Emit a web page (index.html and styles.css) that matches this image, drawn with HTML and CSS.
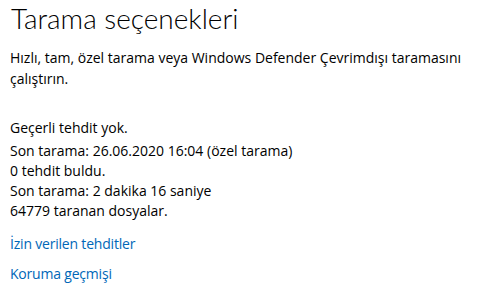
FILE: index.html
```html
<!DOCTYPE html>
<html lang="tr">
<head>
<meta charset="utf-8">
<link rel="stylesheet" href="styles.css">
</head>
<body>
<main class="page">
  <h1 class="title">Tarama seçenekleri</h1>
  <p class="desc">Hızlı, tam, özel tarama veya Windows Defender Çevrimdışı taramasını çalıştırın.</p>
  <section class="status">
    <p class="status-head">Geçerli tehdit yok.</p>
    <p class="line">Son tarama: 26.06.2020 16:04 (özel tarama)</p>
    <p class="line">0 tehdit buldu.</p>
    <p class="line">Son tarama: 2 dakika 16 saniye</p>
    <p class="line">64779 taranan dosyalar.</p>
  </section>
  <nav class="links">
    <a class="link" href="#">İzin verilen tehditler</a>
    <a class="link" href="#">Koruma geçmişi</a>
  </nav>
</main>
</body>
</html>
```
FILE: styles.css
```css
html, body { margin: 0; padding: 0; background: #fff; }
body { font-family: "Open Sans", "Noto Sans", sans-serif; color: #000; }
.page { padding: 0 10px; width: 470px; }
.title { margin: 0; padding-left: 1px; font-family: "Lato", "Open Sans", sans-serif; font-weight: 300; font-size: 28px; line-height: 36px; letter-spacing: 0; }
.desc { margin: 11px 0 0; font-size: 14px; line-height: 21px; letter-spacing: 0; }
.status { margin-top: 29px; }
.status p { margin: 0; font-size: 14px; line-height: 20px; letter-spacing: 0; }
.status-head { margin-bottom: 3px !important; }
.links { display: flex; flex-direction: column; align-items: flex-start; gap: 10px; margin-top: 13px; }
.link { font-size: 14px; line-height: 20px; color: #0067b8; text-decoration: none; letter-spacing: -0.2px; }
```
